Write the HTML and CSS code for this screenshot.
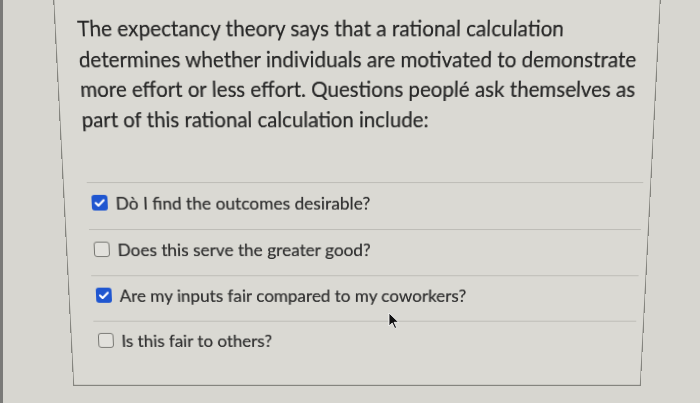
FILE: index.html
```html
<!DOCTYPE html>
<html lang="en">
<head>
<meta charset="utf-8">
<title>Question</title>
<link rel="stylesheet" href="styles.css">
</head>
<body>
<div class="screen">
  <div class="card">
    <p class="question">The expectancy theory says that a rational calculation determines whether individuals are motivated to demonstrate more effort or less effort. Questions peoplé ask themselves as part of this rational calculation include:</p>
    <ul class="answers">
      <li class="answer"><span class="box checked"><svg viewBox="0 0 16 16" width="16" height="16"><path d="M4 8.3l2.6 2.6L12 5.4" fill="none" stroke="#fff" stroke-width="2.2" stroke-linecap="round" stroke-linejoin="round"/></svg></span><span class="label">Dò I find the outcomes desirable?</span></li>
      <li class="answer"><span class="box"></span><span class="label">Does this serve the greater good?</span></li>
      <li class="answer"><span class="box checked"><svg viewBox="0 0 16 16" width="16" height="16"><path d="M4 8.3l2.6 2.6L12 5.4" fill="none" stroke="#fff" stroke-width="2.2" stroke-linecap="round" stroke-linejoin="round"/></svg></span><span class="label">Are my inputs fair compared to my coworkers?</span></li>
      <li class="answer"><span class="box"></span><span class="label">Is this fair to others?</span></li>
    </ul>
  </div>
  <svg class="cursor" viewBox="0 0 12 18" width="12" height="18"><path d="M1 1L1 14L4.2 11L6.8 16.5L8.6 15.6L6.1 10.3L10.6 10.3Z" fill="#111" stroke="#fff" stroke-width="0.8"/></svg>
</div>
</body>
</html>
```
FILE: styles.css
```css
html, body {
  margin: 0;
  padding: 0;
}
body {
  width: 700px;
  height: 403px;
  overflow: hidden;
  background: #d7d6d0;
  font-family: Lato, "Noto Sans", sans-serif;
  color: #2f2f2f;
}
.screen {
  position: relative;
  height: 403px;
  overflow: hidden;
  border-left: 3px solid #7a7a78;
  box-sizing: border-box;
}
.card {
  margin-left: 60px;
  width: 588px;
  height: 416px;
  margin-top: -20px;
  box-sizing: border-box;
  border: 1px solid #85857f;
  border-top: none;
  background: #dad9d3;
  padding: 36px 0 0 21px;
  transform: perspective(1000px) rotateX(-10deg);
  transform-origin: 50% 50%;
}
.question {
  margin: 0;
  width: 560px;
  font-size: 20.2px;
  line-height: 29.6px;
  color: #262626;
  text-shadow: 0 0 0.6px rgba(0,0,0,0.5);
}
.answers {
  list-style: none;
  margin: 48px 0 0 0;
  padding: 0 0 0 2px;
  width: 556px;
}
.answer {
  display: flex;
  align-items: center;
  gap: 8px;
  height: 48px;
  border-top: 1px solid #bdbcb6;
  box-sizing: border-box;
  padding: 0 0 7px 4px;
  font-size: 17.4px;
}
.box {
  width: 16px;
  height: 16px;
  flex: none;
  box-sizing: border-box;
  border: 1.5px solid #757570;
  border-radius: 3px;
  background: #e2e1dc;
  display: flex;
}
.box.checked {
  border: none;
  background: #1f56d0;
}
.label {
  color: #2e2e2e;
  text-shadow: 0 0 0.6px rgba(0,0,0,0.5);
}
.cursor {
  position: absolute;
  left: 385px;
  top: 312px;
}
```
